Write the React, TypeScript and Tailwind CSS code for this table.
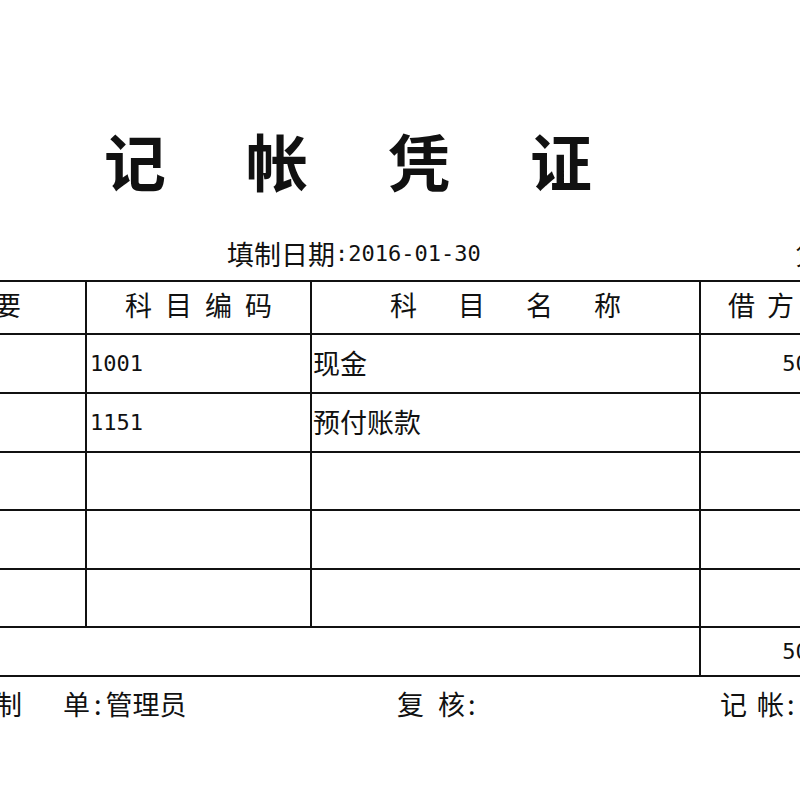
const cjk = "font-['Noto_Sans_CJK_SC',sans-serif]";
const mono = "font-['DejaVu_Sans_Mono','Noto_Sans_CJK_SC',monospace]";

type Line = { code: string; name: string; debit: string; credit: string };

const lines: Line[] = [
  { code: "1001", name: "现金", debit: "5000.00", credit: "" },
  { code: "1151", name: "预付账款", debit: "", credit: "5000.00" },
  { code: "", name: "", debit: "", credit: "" },
  { code: "", name: "", debit: "", credit: "" },
  { code: "", name: "", debit: "", credit: "" },
];

const rowHeights = ["h-[59px]", "h-[59px]", "h-[58px]", "h-[59px]", "h-[58px]"];

function Spaced({ text, gap }: { text: string; gap: string }) {
  return (
    <div className={`flex justify-center whitespace-nowrap ${gap}`}>
      {text.split("").map((c, i) => (
        <span key={i}>{c}</span>
      ))}
    </div>
  );
}

export default function App() {
  return (
    <div className={`w-[800px] h-[800px] overflow-hidden bg-white text-[#111] ${cjk}`}>
      {/* Title */}
      <div className="ml-[104px] mt-[129px] flex gap-[80px] text-[62px] leading-[62px] font-bold">
        <span>记</span>
        <span>帐</span>
        <span>凭</span>
        <span>证</span>
      </div>

      {/* Date */}
      <div className="mt-[48px] h-[30px] flex items-center text-[27px] leading-[30px] whitespace-nowrap">
        <span className="ml-[227px] shrink-0">填制日期</span>
        <span className={`${mono} text-[22px] shrink-0`}>:2016-01-30</span>
        <span className="ml-[315px] shrink-0">凭证号</span>
      </div>

      {/* Table */}
      <div className="mt-[11px] ml-[-110px] w-[1211px] border-t-2 border-[#111] text-[27px] whitespace-nowrap">
        <div className="flex h-[53px] border-b-2 border-[#111]">
          <div className="w-[197px] shrink-0 h-full border-r-2 border-[#111] flex items-center justify-center pb-[4px]">
            <Spaced text="摘要" gap="gap-[13px]" />
          </div>
          <div className="w-[225px] shrink-0 h-full border-r-2 border-[#111] flex items-center justify-center pb-[4px]">
            <Spaced text="科目编码" gap="gap-[13px]" />
          </div>
          <div className="w-[389px] shrink-0 h-full border-r-2 border-[#111] flex items-center justify-center pb-[4px]">
            <Spaced text="科目名称" gap="gap-[41px]" />
          </div>
          <div className="w-[200px] shrink-0 h-full border-r-2 border-[#111] flex items-center justify-center pb-[4px]">
            <Spaced text="借方金额" gap="gap-[12px]" />
          </div>
          <div className="w-[200px] shrink-0 h-full border-r-2 border-[#111] flex items-center justify-center pb-[4px]">
            <Spaced text="贷方金额" gap="gap-[12px]" />
          </div>
        </div>

        {lines.map((l, i) => (
          <div key={i} className={`flex ${rowHeights[i]} border-b-2 border-[#111]`}>
            <div className="w-[197px] shrink-0 h-full border-r-2 border-[#111]" />
            <div className={`w-[225px] shrink-0 h-full border-r-2 border-[#111] flex items-center pl-[3px] ${mono} text-[22px]`}>
              {l.code}
            </div>
            <div className="w-[389px] shrink-0 h-full border-r-2 border-[#111] flex items-center pl-[1px]">
              {l.name}
            </div>
            <div className={`w-[200px] shrink-0 h-full border-r-2 border-[#111] flex items-center justify-end pr-[24px] ${mono} text-[22px]`}>
              {l.debit}
            </div>
            <div className={`w-[200px] shrink-0 h-full border-r-2 border-[#111] flex items-center justify-end pr-[24px] ${mono} text-[22px]`}>
              {l.credit}
            </div>
          </div>
        ))}

        {/* Total */}
        <div className="flex h-[49px] border-b-2 border-[#111]">
          <div className="w-[811px] shrink-0 h-full border-r-2 border-[#111]" />
          <div className={`w-[200px] shrink-0 h-full border-r-2 border-[#111] flex items-center justify-end pr-[24px] ${mono} text-[22px]`}>
            5000.00
          </div>
          <div className={`w-[200px] shrink-0 h-full border-r-2 border-[#111] flex items-center justify-end pr-[24px] ${mono} text-[22px]`}>
            5000.00
          </div>
        </div>
      </div>

      {/* Signatures */}
      <div className="mt-[12px] ml-[-5px] h-[30px] flex items-center text-[27px] leading-[30px] whitespace-nowrap">
        <div className="w-[402px] shrink-0 flex items-center">
          <span>制</span>
          <span className="ml-[41px]">单</span>
          <span className="mx-[4px]">:</span>
          <span>管理员</span>
        </div>
        <div className="w-[323px] shrink-0 flex items-center">
          <span>复</span>
          <span className="ml-[14px]">核</span>
          <span className="ml-[3px]">:</span>
        </div>
        <div className="flex shrink-0 items-center">
          <span>记</span>
          <span className="ml-[10px]">帐</span>
          <span className="ml-[3px]">:</span>
        </div>
      </div>
    </div>
  );
}
